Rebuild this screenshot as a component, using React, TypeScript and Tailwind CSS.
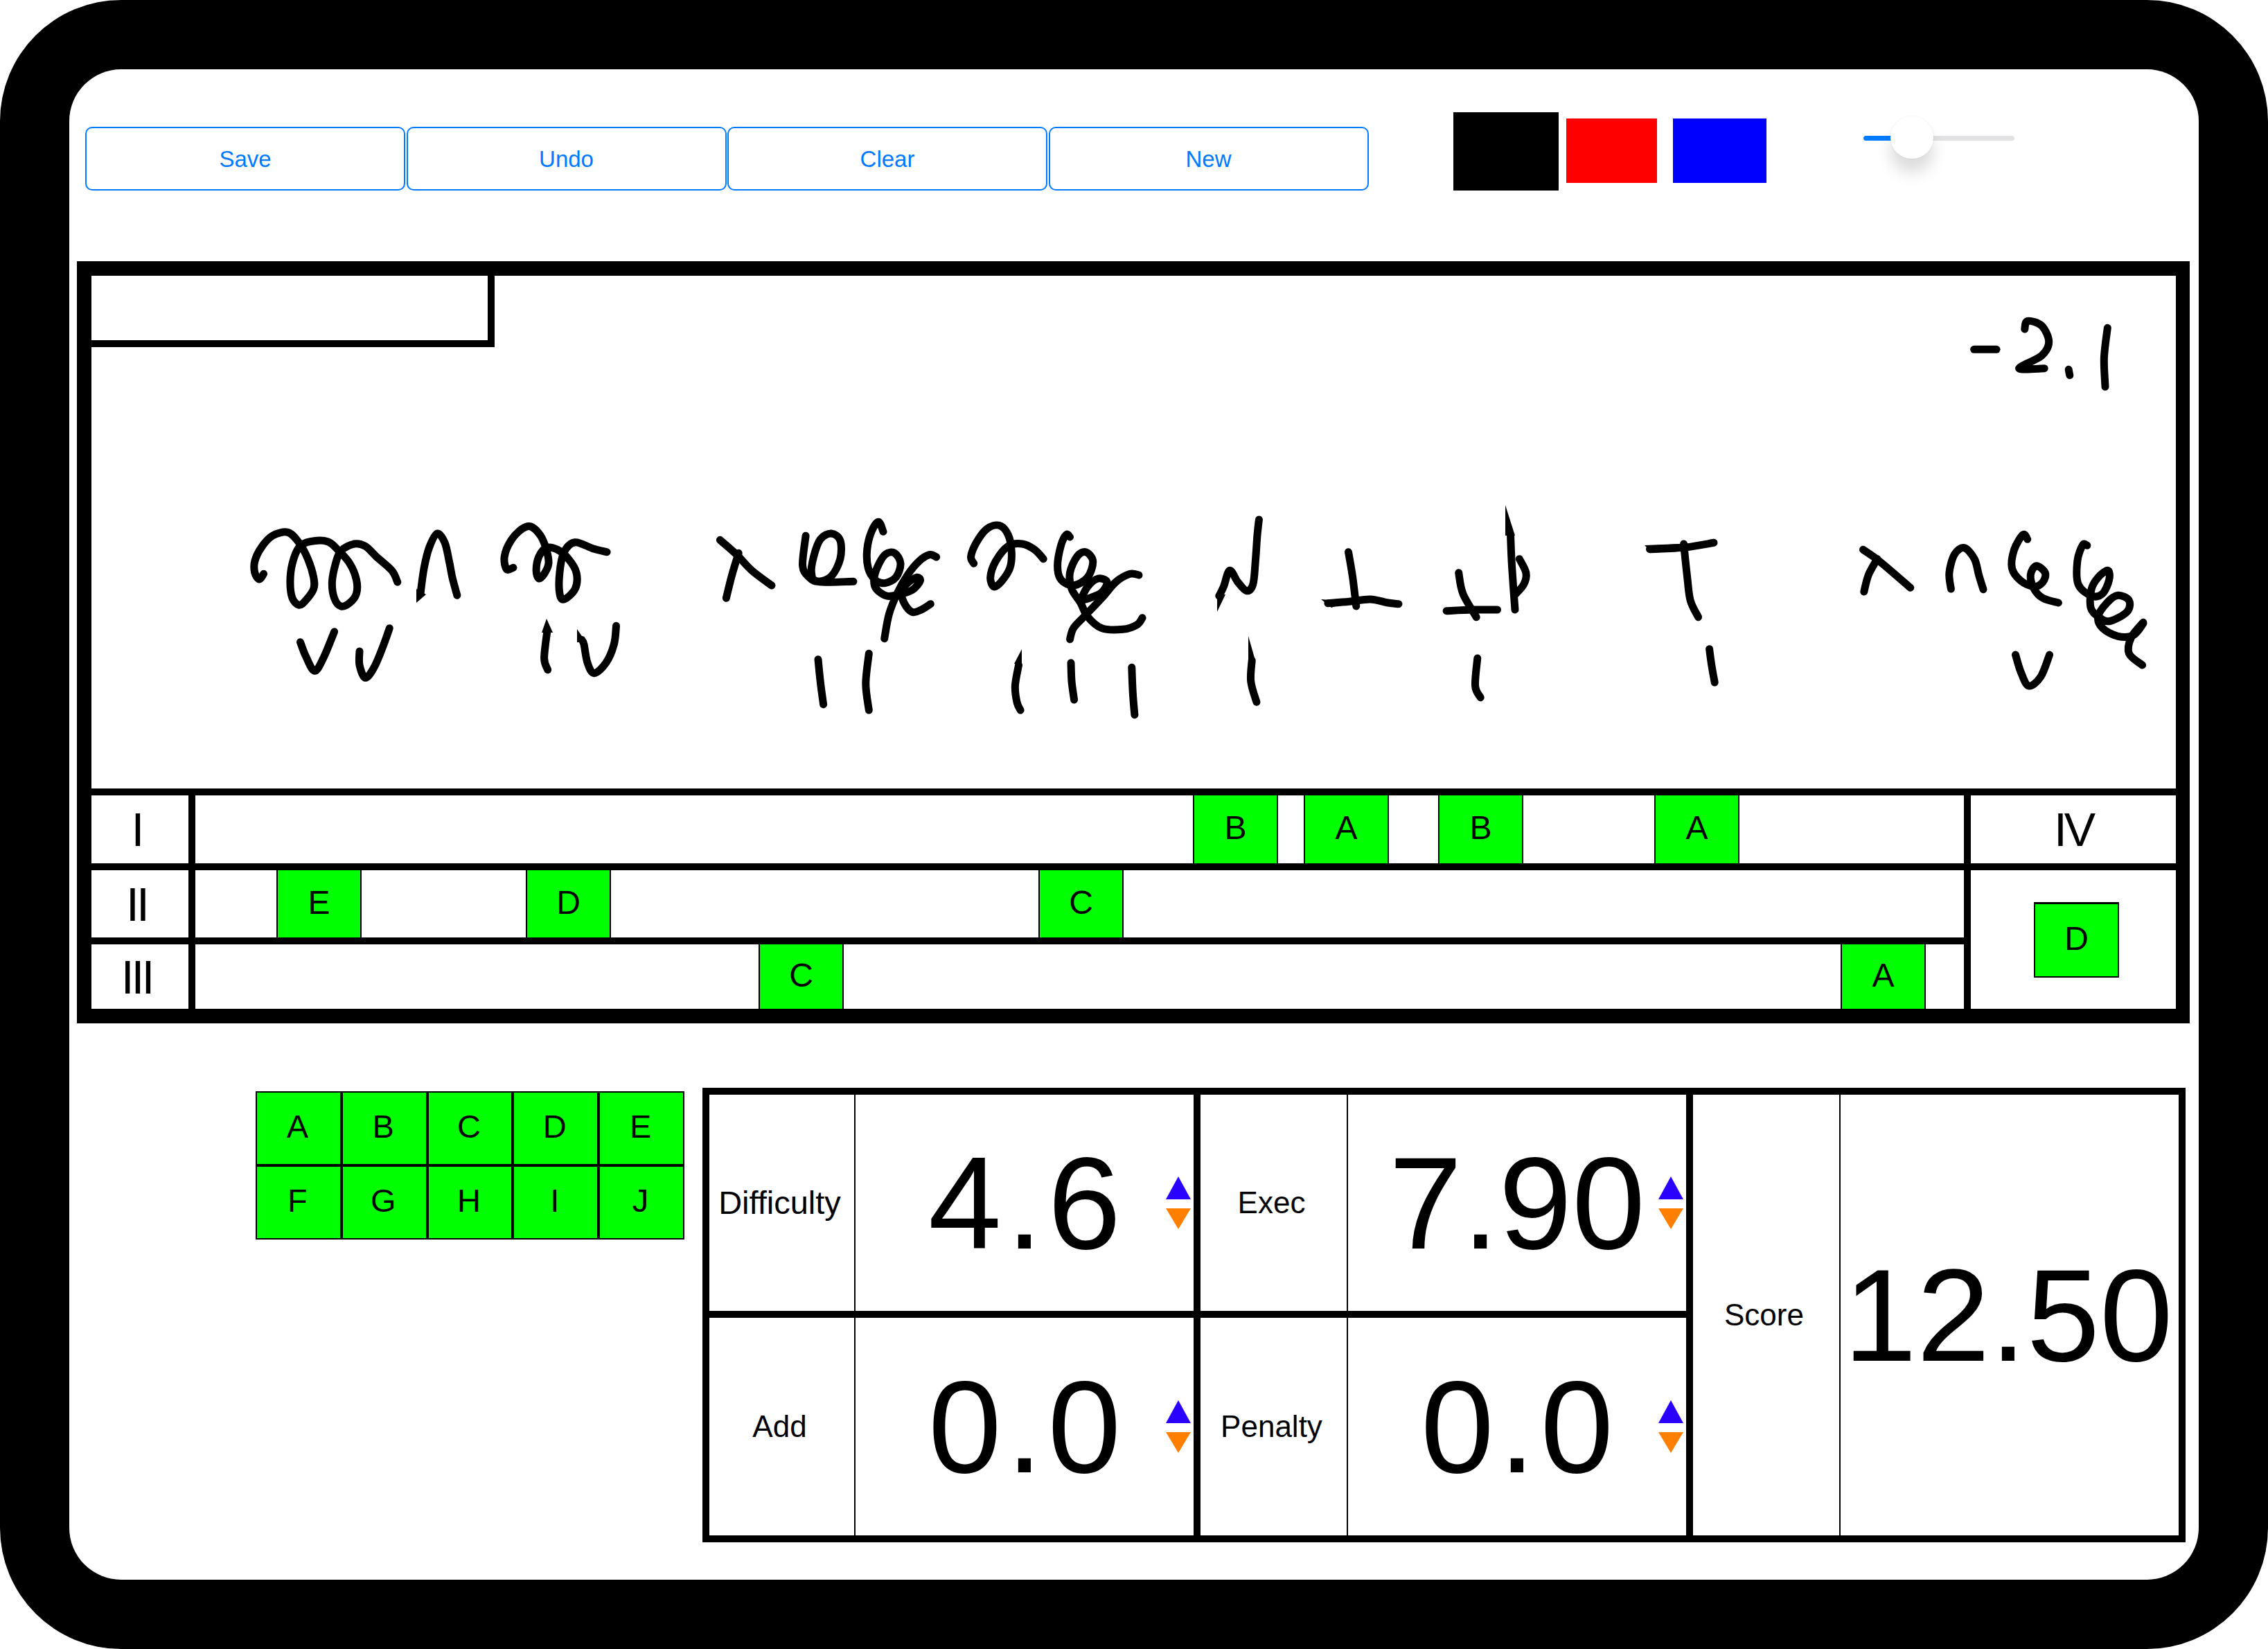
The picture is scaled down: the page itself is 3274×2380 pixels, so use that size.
type Pt = [number, number];

// handwriting, traced per crop: origin + scale so the numbers stay readable
const toPage = (ox: number, oy: number, sx: number, sy: number, pts: Pt[]): Pt[] =>
  pts.map(([x, y]) => [ox + x / sx, oy + y / sy]);

const smooth = (p: Pt[]) => {
  let d = `M${p[0][0].toFixed(1)} ${p[0][1].toFixed(1)}`;
  for (let i = 0; i < p.length - 1; i++) {
    const a = p[Math.max(i - 1, 0)];
    const b = p[i];
    const c = p[i + 1];
    const e = p[Math.min(i + 2, p.length - 1)];
    const c1x = b[0] + (c[0] - a[0]) / 6;
    const c1y = b[1] + (c[1] - a[1]) / 6;
    const c2x = c[0] - (e[0] - b[0]) / 6;
    const c2y = c[1] - (e[1] - b[1]) / 6;
    d += `C${c1x.toFixed(1)} ${c1y.toFixed(1)} ${c2x.toFixed(1)} ${c2y.toFixed(1)} ${c[0].toFixed(1)} ${c[1].toFixed(1)}`;
  }
  return d;
};

const groupA: Pt[][] = [
  [[95, 385], [85, 408], [75, 380], [75, 330], [90, 270], [115, 220], [150, 205], [175, 250], [195, 320], [208, 400], [208, 450], [190, 500], [175, 520], [160, 490], [155, 420], [160, 340], [175, 270], [200, 245], [240, 245], [265, 285], [290, 340], [305, 410], [305, 470], [290, 510], [270, 525], [255, 490], [250, 420], [258, 340], [270, 285], [300, 255], [325, 265], [350, 310], [385, 370], [398, 420]],
  [[450, 470], [458, 360], [470, 270], [488, 210], [505, 250], [515, 330], [522, 400], [533, 478]],
  [[660, 358], [645, 365], [640, 310], [655, 240], [680, 190], [700, 180], [722, 220], [735, 280], [740, 340], [730, 385], [718, 405], [712, 370], [718, 310], [735, 272], [760, 280], [785, 320], [803, 380], [800, 450], [775, 495], [765, 470], [765, 380], [775, 290], [800, 248], [840, 275], [872, 290]],
  [[1128, 238], [1165, 300], [1200, 370], [1245, 435]],
  [[1170, 295], [1155, 390], [1142, 490]],
  [[1322, 220], [1315, 350], [1330, 400], [1350, 418], [1380, 395], [1400, 320], [1400, 240], [1380, 210], [1355, 235], [1340, 310], [1335, 380], [1350, 418], [1430, 418]],
  [[178, 680], [190, 740], [210, 805], [230, 750], [255, 635]],
  [[312, 720], [312, 780], [325, 835], [345, 790], [365, 700], [380, 620]],
  [[737, 630], [730, 750], [738, 800]],
  [[815, 670], [820, 690], [828, 770], [843, 815], [870, 770], [888, 690], [893, 610]],
  [[1350, 755], [1355, 850], [1362, 950]],
  [[1465, 730], [1458, 860], [1465, 975]],
];

const groupLoop: Pt[][] = [
  [[165, 112], [145, 70], [115, 110], [95, 190], [100, 270], [130, 320], [170, 335], [220, 310], [240, 250], [215, 205], [175, 210], [140, 265], [125, 320], [135, 360], [180, 390], [230, 385], [290, 365], [325, 325], [310, 310], [270, 335], [245, 370], [255, 420], [290, 460], [330, 450], [370, 425]],
  [[395, 222], [365, 212], [320, 240], [270, 300], [225, 380], [190, 470], [170, 575]],
];

const groupB: Pt[][] = [
  [[168, 340], [160, 310], [175, 250], [205, 190], [240, 175], [265, 215], [275, 290], [270, 360], [245, 420], [225, 440], [215, 400], [230, 330], [265, 265], [305, 255], [340, 280], [365, 320]],
  [[440, 225], [430, 215], [415, 260], [405, 350], [415, 410], [450, 435], [490, 400], [505, 330], [485, 290], [460, 310], [440, 380], [445, 450], [470, 510], [490, 570], [530, 620], [590, 625], [630, 605], [645, 575]],
  [[635, 390], [610, 385], [570, 420], [530, 490], [480, 570], [450, 620], [440, 668]],
  [[470, 500], [495, 490], [530, 465], [545, 420], [520, 405], [490, 440], [470, 500]],
  [[862, 480], [875, 440], [892, 370], [915, 420], [940, 458], [958, 430], [965, 330], [970, 220], [975, 150]],
  [[1228, 290], [1240, 400], [1250, 525]],
  [[1170, 512], [1230, 505], [1290, 495], [1340, 510], [1370, 515]],
  [[295, 780], [285, 870], [290, 940], [300, 975]],
  [[443, 770], [445, 850], [452, 930]],
  [[615, 790], [618, 900], [623, 995]],
  [[955, 760], [952, 850], [968, 940]],
  [[1540, 380], [1552, 470], [1590, 572]],
];

const groupC: Pt[][] = [
  [[-50, 545], [10, 540], [65, 540]],
  [[95, 220], [98, 350], [105, 540]],
  [[115, 320], [130, 380], [125, 430], [105, 475]],
  [[410, 278], [490, 270], [555, 250]],
  [[487, 255], [495, 400], [502, 500], [520, 572]],
  [[20, 750], [15, 870], [27, 920]],
  [[545, 710], [550, 780], [557, 855]],
  [[893, 280], [930, 330], [1000, 445]],
  [[925, 320], [905, 390], [895, 462]],
  [[1092, 450], [1088, 380], [1100, 300], [1122, 272], [1145, 320], [1155, 390], [1165, 452]],
  [[1265, 235], [1255, 215], [1235, 280], [1230, 360], [1250, 415], [1280, 440], [1300, 420], [1305, 380], [1285, 350], [1272, 390], [1280, 450], [1300, 490], [1335, 510]],
  [[1400, 262], [1390, 260], [1378, 330], [1380, 430], [1410, 480], [1435, 470], [1450, 410], [1447, 370], [1425, 400], [1410, 450], [1408, 530], [1425, 570], [1450, 590], [1490, 550], [1495, 500], [1470, 478], [1445, 510], [1425, 570], [1435, 620], [1470, 655], [1505, 650], [1527, 600]],
  [[1527, 595], [1500, 660], [1495, 730], [1525, 780]],
  [[1238, 735], [1250, 810], [1268, 870], [1295, 830], [1315, 735]],
];

const groupScore: Pt[][] = [
  [[1045, 1213], [1085, 1213]],
  [[1135, 1125], [1140, 1090], [1165, 1110], [1178, 1180], [1165, 1240], [1125, 1295], [1170, 1295]],
  [[1213, 1300], [1215, 1325]],
  [[1282, 1120], [1276, 1250], [1278, 1375]],
];

const strokes: Pt[][] = [
  ...groupA.map((s) => toPage(320, 700, 1.568, 3, s)),
  ...groupLoop.map((s) => toPage(1220, 730, 3, 3, s)),
  ...groupB.map((s) => toPage(1320, 700, 1.96, 3, s)),
  ...groupC.map((s) => toPage(2120, 700, 1.568, 3, s)),
  ...groupScore.map((s) => toPage(2000, 100, 1.23, 3, s)),
];

// tapered pen starts, in page coordinates
const wedges = [
  "601,870 601,850 615,858",
  "1757,883 1757,858 1769,858",
  "1475,937 1464,958 1475,960",
  "1802,918 1802,953 1812,953",
  "2173,729 2173,773 2187,773",
  "2374,787 2385,798 2425,795 2425,785",
  "1907,865 1922,877 1948,868",
  "789,893 782,913 798,913",
  "833,908 833,927 846,927",
];

function Ink() {
  return (
    <svg
      className="absolute left-0 top-0 pointer-events-none"
      width="3009"
      height="740"
      viewBox="132 398 3009 740"
      fill="none"
    >
      {strokes.map((s, i) => (
        <path key={i} d={smooth(s)} stroke="#000" strokeWidth="11" strokeLinecap="round" strokeLinejoin="round" />
      ))}
      {wedges.map((w, i) => (
        <polygon key={i} points={w} fill="#000" />
      ))}
    </svg>
  );
}

function ToolButton({ label }: { label: string }) {
  return (
    <button className="w-[462px] h-[92px] pt-[2px] border-2 border-[#007aff] rounded-[10px] text-[#007aff] text-[33px] bg-white">
      {label}
    </button>
  );
}

function Chip({ letter, className }: { letter: string; className: string }) {
  return (
    <div
      className={`w-[123px] h-full shrink-0 bg-[#00ff00] border-x-2 border-black flex items-center justify-center text-[48px] pb-[4px] ${className}`}
    >
      {letter}
    </div>
  );
}

function RowLabel({ text }: { text: string }) {
  return (
    <div className="w-[150px] shrink-0 h-full border-r-[10px] border-black flex items-center justify-center pr-[10px] text-[68px] tracking-[-4px]">
      {text}
    </div>
  );
}

function Arrows() {
  return (
    <svg className="absolute right-[4px] top-1/2 -translate-y-1/2" width="36" height="76" viewBox="0 0 36 76">
      <polygon points="18,0 36,33 0,33" fill="#2a00ff" />
      <polygon points="0,46 36,46 18,76" fill="#ff8000" />
    </svg>
  );
}

function ScoreCell({
  label,
  value,
  labelClass,
  valueClass = "",
  className,
  arrows = true,
}: {
  label: string;
  value: string;
  labelClass: string;
  valueClass?: string;
  className: string;
  arrows?: boolean;
}) {
  return (
    <div className={`flex ${className}`}>
      <div className={`${labelClass} shrink-0 border-r-2 border-black flex items-center justify-center pr-[6px]`}>
        {label}
      </div>
      <div className={`relative flex-1 flex items-center justify-center text-[190px] leading-none whitespace-nowrap ${valueClass}`}>
        {value}
        {arrows && <Arrows />}
      </div>
    </div>
  );
}

export default function App() {
  return (
    <div className="w-[3274px] h-[2380px] bg-white font-['Liberation_Sans',Arial,sans-serif] text-black overflow-hidden">
      <div className="w-full h-full bg-black rounded-[175px] p-[100px]">
        <div className="w-full h-full bg-white rounded-[75px]">
          {/* toolbar */}
          <div className="flex items-start h-[277px] pl-[23px]">
            <div className="flex gap-[1.5px] mt-[83px]">
              <ToolButton label="Save" />
              <ToolButton label="Undo" />
              <ToolButton label="Clear" />
              <ToolButton label="New" />
            </div>
            <div className="w-[152px] h-[113px] bg-black ml-[122.5px] mt-[62px]" />
            <div className="w-[131px] h-[93px] bg-[#ff0000] ml-[11px] mt-[71px]" />
            <div className="w-[135px] h-[93px] bg-[#0000ff] ml-[23px] mt-[71px]" />
            <div className="relative w-[218px] h-[61px] ml-[140px] mt-[68px] pt-[2px] flex items-center">
              <div className="w-[60px] h-[7px] bg-[#007aff] rounded-l-full" />
              <div className="flex-1 h-[7px] bg-[#e2e2e5] rounded-r-full" />
              <div className="absolute left-[39px] top-0 w-[62px] h-[61px] rounded-full bg-white shadow-[0_20px_22px_rgba(0,0,0,0.14),0_0_3px_rgba(0,0,0,0.08)]" />
            </div>
          </div>

          {/* score sheet */}
          <div className="ml-[11px] w-[3050px] h-[1100px] border-l-[21px] border-r-[20px] border-y-[21px] border-black flex flex-col">
            <div className="relative h-[740px] shrink-0">
              <div className="w-[582px] h-[103px] border-r-[10px] border-b-[10px] border-black" />
              <Ink />
            </div>
            <div className="flex flex-1 min-h-0 border-t-[10px] border-black">
              <div className="w-[2703px] shrink-0 flex flex-col">
                <div className="flex h-[108px] shrink-0 border-b-[10px] border-black">
                  <RowLabel text="I" />
                  <Chip letter="B" className="ml-[1440px]" />
                  <Chip letter="A" className="ml-[37px]" />
                  <Chip letter="B" className="ml-[71px]" />
                  <Chip letter="A" className="ml-[189px]" />
                </div>
                <div className="flex h-[107px] shrink-0 border-b-[10px] border-black">
                  <RowLabel text="II" />
                  <Chip letter="E" className="ml-[117px]" />
                  <Chip letter="D" className="ml-[237px]" />
                  <Chip letter="C" className="ml-[617px]" />
                </div>
                <div className="flex flex-1 min-h-0">
                  <RowLabel text="III" />
                  <Chip letter="C" className="ml-[813px]" />
                  <Chip letter="A" className="ml-[1439px]" />
                </div>
              </div>
              <div className="flex-1 border-l-[10px] border-black flex flex-col">
                <div className="h-[108px] shrink-0 border-b-[10px] border-black flex items-center justify-center text-[68px] tracking-[-4px]">
                  IV
                </div>
                <div className="flex-1 flex items-center pl-[91px]">
                  <div className="w-[123px] h-[109px] bg-[#00ff00] border-2 border-t-[3px] border-black flex items-center justify-center text-[48px] pb-[4px]">
                    D
                  </div>
                </div>
              </div>
            </div>
          </div>

          {/* letters + totals */}
          <div className="flex items-start mt-[93px]">
            <div className="ml-[269px] mt-[5px] w-[619px] h-[214px] grid grid-cols-5 grid-rows-2">
              {["A", "B", "C", "D", "E", "F", "G", "H", "I", "J"].map((l) => (
                <div
                  key={l}
                  className="bg-[#00ff00] border-2 border-black flex items-center justify-center text-[47px] pb-[4px] pr-[3px]"
                >
                  {l}
                </div>
              ))}
            </div>
            <div className="ml-[26px] w-[2141px] h-[656px] border-[10px] border-black flex">
              <div className="w-[709px] shrink-0 border-r-[10px] border-black flex flex-col">
                <ScoreCell label="Difficulty" value="4.6" labelClass="w-[211px] text-[47px]" valueClass="tracking-[7px] pl-[7px]" className="h-[322px] shrink-0 border-b-[10px] border-black" />
                <ScoreCell label="Add" value="0.0" labelClass="w-[211px] text-[44px]" valueClass="tracking-[7px] pl-[7px]" className="flex-1" />
              </div>
              <div className="w-[711px] shrink-0 border-r-[10px] border-black flex flex-col">
                <ScoreCell label="Exec" value="7.90" labelClass="w-[213px] text-[44px]" className="h-[322px] shrink-0 border-b-[10px] border-black" />
                <ScoreCell label="Penalty" value="0.0" labelClass="w-[213px] text-[44px]" valueClass="tracking-[7px] pl-[7px]" className="flex-1" />
              </div>
              <ScoreCell label="Score" value="12.50" labelClass="w-[213px] text-[44px]" valueClass="pr-[4px]" className="flex-1" arrows={false} />
            </div>
          </div>
        </div>
      </div>
    </div>
  );
}
